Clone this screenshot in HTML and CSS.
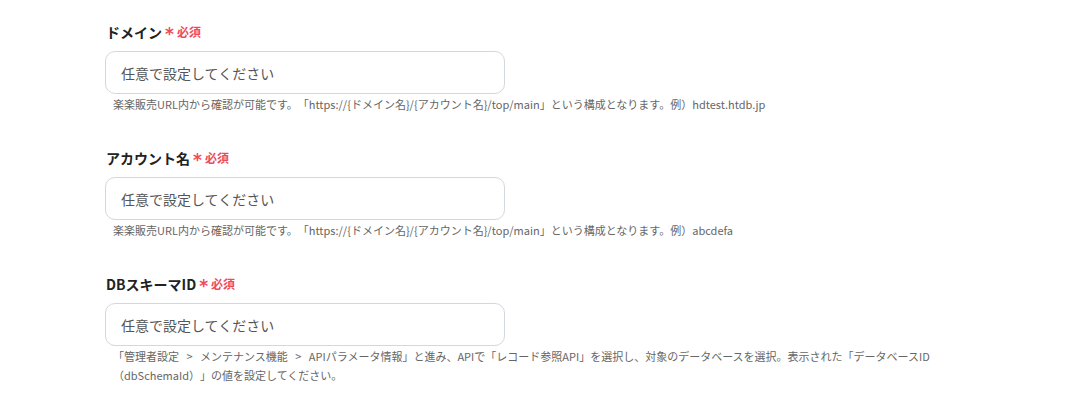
FILE: index.html
```html
<!DOCTYPE html>
<html lang="ja">
<head>
<meta charset="utf-8">
<link rel="stylesheet" href="styles.css">
</head>
<body>
<div class="form">
  <div class="field">
    <div class="label">ドメイン<span class="req"><span class="star">*</span>必須</span></div>
    <div class="input">任意で設定してください</div>
    <div class="help">楽楽販売URL内から確認が可能です。「https://{ドメイン名}/{アカウント名}/top/main」という構成となります。例）hdtest.htdb.jp</div>
  </div>
  <div class="field">
    <div class="label">アカウント名<span class="req"><span class="star">*</span>必須</span></div>
    <div class="input">任意で設定してください</div>
    <div class="help">楽楽販売URL内から確認が可能です。「https://{ドメイン名}/{アカウント名}/top/main」という構成となります。例）abcdefa</div>
  </div>
  <div class="field">
    <div class="label">DBスキーマID<span class="req"><span class="star">*</span>必須</span></div>
    <div class="input">任意で設定してください</div>
    <div class="help">「管理者設定 &gt; メンテナンス機能 &gt; APIパラメータ情報」と進み、APIで「レコード参照API」を選択し、対象のデータベースを選択。表示された「データベースID（dbSchemaId）」の値を設定してください。</div>
  </div>
</div>
</body>
</html>
```
FILE: styles.css
```css
html, body {
  margin: 0;
  padding: 0;
  background: #ffffff;
}
body {
  font-family: "Noto Sans CJK JP", "Noto Sans", sans-serif;
  color: #222222;
  text-spacing-trim: space-all;
}
.form {
  padding: 22px 0 0 105px;
  display: flex;
  flex-direction: column;
  gap: 34px;
}
.field {
  display: flex;
  flex-direction: column;
}
.label {
  font-size: 14px;
  font-weight: 700;
  line-height: 20px;
  height: 20px;
  padding-left: 1px;
  margin-bottom: 9px;
  color: #222222;
  display: flex;
  align-items: center;
}
.req {
  color: #f04a5a;
  font-size: 12px;
  font-weight: 700;
  display: inline-flex;
  align-items: center;
  margin-left: 3px;
}
.star {
  font-size: 17px;
  line-height: 1;
  margin-right: 3px;
  margin-top: 5px;
  font-family: "DejaVu Sans", sans-serif;
}
.input {
  box-sizing: border-box;
  width: 400px;
  height: 43px;
  border: 1px solid #d3d7de;
  border-radius: 10px;
  padding: 0 15px;
  display: flex;
  align-items: center;
  font-size: 14px;
  color: #555555;
}
.help {
  margin-top: 1px;
  padding-left: 8px;
  max-width: 900px;
  font-size: 11px;
  line-height: 19px;
  color: #666666;
  word-spacing: 5px;
}
```
